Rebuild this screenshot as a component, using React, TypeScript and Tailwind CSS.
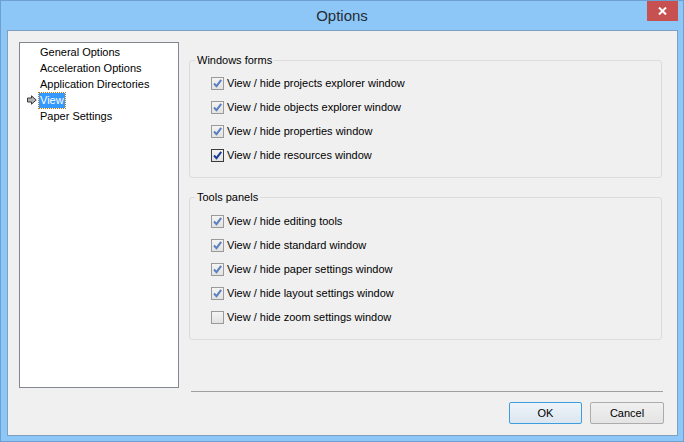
import React from 'react';

const font = { fontFamily: '"Liberation Sans", Arial, sans-serif' };

const Check: React.FC<{ checked: boolean; focus?: boolean }> = ({ checked, focus }) => (
  <span
    className={`w-[13px] h-[13px] shrink-0 border flex items-center justify-center bg-linear-to-b from-[#f4f4f4] to-[#e2e2e2] ${
      focus ? 'border-[#3c3c3c]' : 'border-[#9a9a9a]'
    }`}
  >
    {checked && (
      <svg width="11" height="11" viewBox="0 0 11 11">
        <path
          d="M2 5.5 L4.5 8.2 L9.2 1.8"
          fill="none"
          stroke={focus ? '#1c3c9c' : '#5c7fc0'}
          strokeWidth="2"
        />
      </svg>
    )}
  </span>
);

const Row: React.FC<{ label: string; checked: boolean; focus?: boolean }> = ({ label, checked, focus }) => (
  <div className="h-[24px] flex items-center gap-[3px]">
    <Check checked={checked} focus={focus} />
    <span className="text-[11px] text-black leading-none">{label}</span>
  </div>
);

const Group: React.FC<{ title: string; pt: string; children: React.ReactNode }> = ({ title, pt, children }) => (
  <fieldset className="border border-[#dcdcdc] rounded-[3px] p-0 m-0 min-w-0 w-[473px]">
    <legend className="ml-[5px] px-[2px] text-[11px] h-[14px] leading-[14px] text-black">{title}</legend>
    <div className={`pl-[21px] pb-[10px] ${pt}`}>{children}</div>
  </fieldset>
);

export default function App() {
  const nav = ['General Options', 'Acceleration Options', 'Application Directories', 'View', 'Paper Settings'];

  return (
    <div
      className="relative w-[684px] h-[442px] bg-[#8cc7f8] border border-[#6f9fcf] flex flex-col overflow-hidden"
      style={font}
    >
      {/* title bar */}
      <div className="relative h-[29px] shrink-0 flex items-center justify-center">
        <span className="text-[15px] text-[#262c33] mt-[1px]">Options</span>
        <div className="absolute top-0 right-[5px] w-[31px] h-[20px] bg-[#c75050] flex items-center justify-center">
          <svg width="9" height="8" viewBox="0 0 9 8">
            <path d="M1 0.5 L8 7.5 M8 0.5 L1 7.5" stroke="#fff" strokeWidth="2" />
          </svg>
        </div>
      </div>

      {/* client */}
      <div className="ml-[6px] mr-[5px] h-[406px] bg-[#f0f0f0] border border-[#7e9fc0] flex pl-[11px] pt-[11px]">
        {/* tree list */}
        <div className="w-[160px] h-[346px] bg-white border border-[#828790] pt-[1px]">
          {nav.map((item) => (
            <div key={item} className="relative h-[16px] flex items-center pl-[19px]">
              {item === 'View' && (
                <svg className="absolute left-[7px] top-[3px]" width="10" height="10" viewBox="0 0 10 10">
                  <path
                    d="M0.5 3 H4.5 V0.8 L9.2 5 L4.5 9.2 V7 H0.5 Z"
                    fill="#b4b4b4"
                    stroke="#3a3a3a"
                    strokeWidth="1"
                  />
                </svg>
              )}
              <span
                className={`text-[11px] leading-none px-[1px] h-[15px] flex items-center ${
                  item === 'View'
                    ? 'bg-[#3399ff] text-white outline outline-1 outline-dotted outline-[#c47a20]'
                    : 'text-black'
                }`}
              >
                {item}
              </span>
            </div>
          ))}
        </div>

        {/* right side */}
        <div className="ml-[10px] w-[475px] flex flex-col">
          <div className="mt-[11px]">
            <Group title="Windows forms" pt="pt-[4px]">
              <Row label="View / hide projects explorer window" checked />
              <Row label="View / hide objects explorer window" checked />
              <Row label="View / hide properties window" checked />
              <Row label="View / hide resources window" checked focus />
            </Group>
          </div>
          <div className="mt-[12px]">
            <Group title="Tools panels" pt="pt-[5px]">
              <Row label="View / hide editing tools" checked />
              <Row label="View / hide standard window" checked />
              <Row label="View / hide paper settings window" checked />
              <Row label="View / hide layout settings window" checked />
              <Row label="View / hide zoom settings window" checked={false} />
            </Group>
          </div>

          <div className="mt-[51px] ml-[2px] mr-[1px] h-px bg-[#a0a0a0]" />

          <div className="mt-[10px] flex justify-end gap-[8px]">
            <button className="w-[73px] h-[22px] border border-[#3c9ee0] rounded-[2px] bg-linear-to-b from-[#eef4f9] to-[#dce6ef] text-[11px] text-black">
              OK
            </button>
            <button className="w-[74px] h-[22px] border border-[#acacac] rounded-[2px] bg-linear-to-b from-[#f0f0f0] to-[#e4e4e4] text-[11px] text-black">
              Cancel
            </button>
          </div>
        </div>
      </div>
    </div>
  );
}
